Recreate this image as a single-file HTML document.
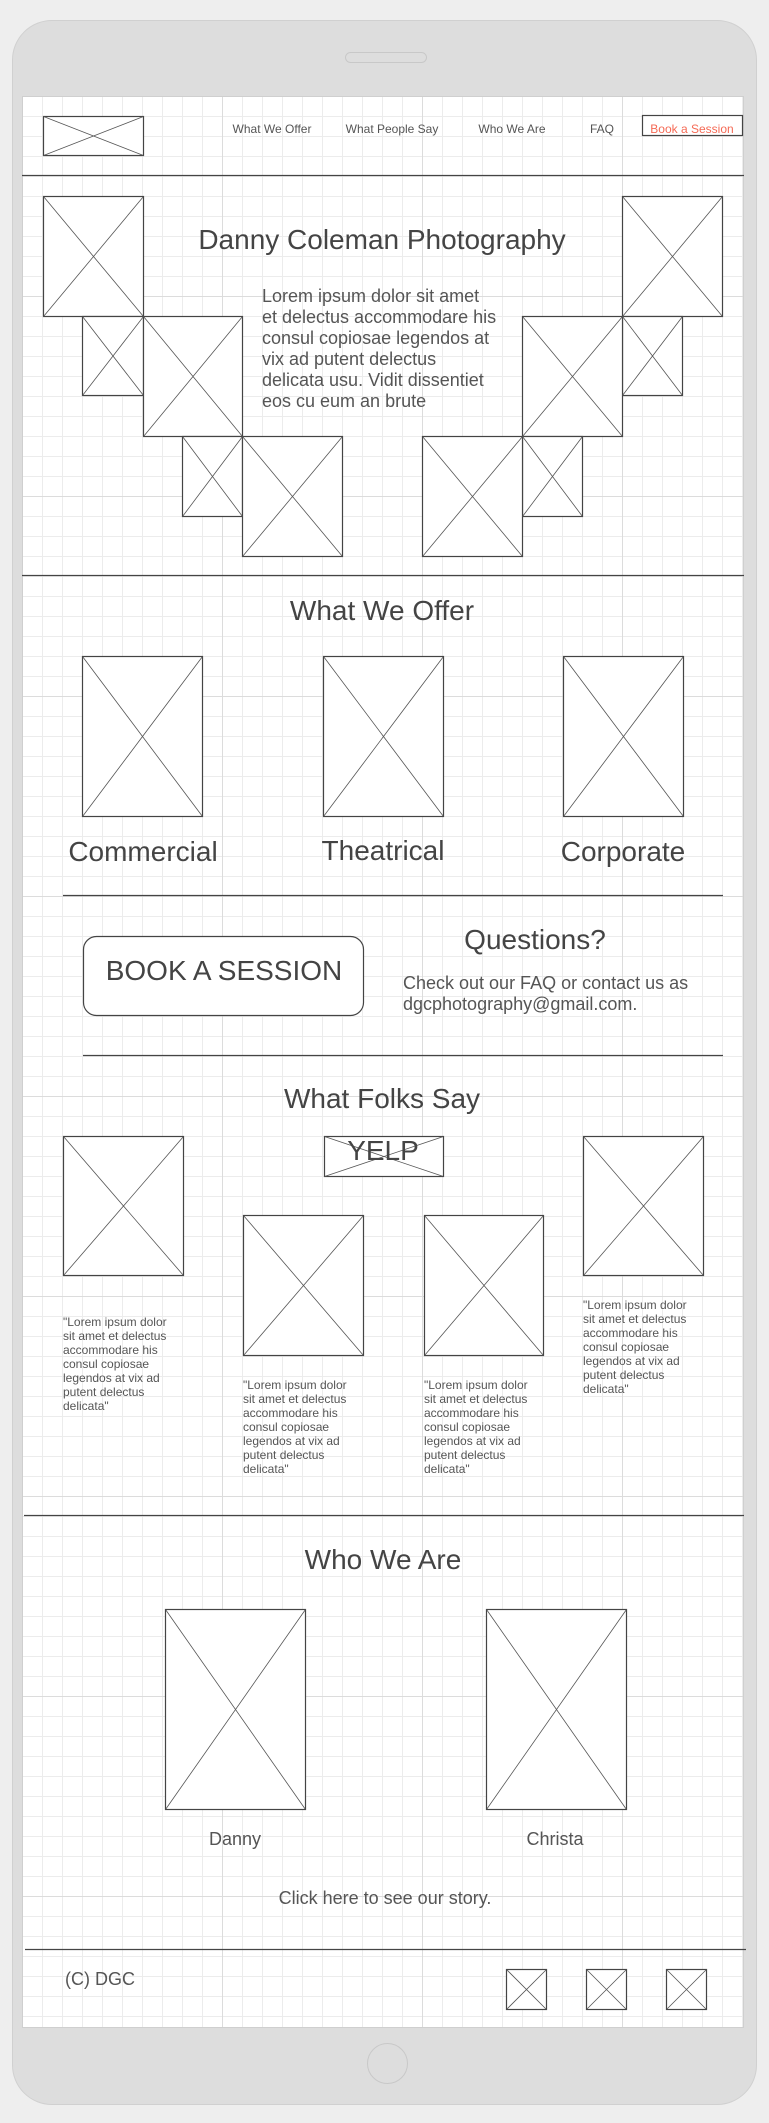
<!DOCTYPE html>
<html><head><meta charset="utf-8"><style>
html,body{margin:0;padding:0;background:#eeeeee;}
body{width:769px;height:2123px;position:relative;overflow:hidden;font-family:"Liberation Sans",sans-serif;}
.dev{position:absolute;left:12px;top:20px;width:745px;height:2085px;background:#dddddd;border:1px solid #d0d0d0;border-radius:40px;box-sizing:border-box;}
.scr{position:absolute;left:22px;top:96px;width:722px;height:1932px;border:1px solid #cfcfcf;box-sizing:border-box;
background-color:#fff;
background-image:linear-gradient(to right,#dcdcdc 1px,transparent 1px),linear-gradient(to bottom,#dcdcdc 1px,transparent 1px),linear-gradient(to right,#ececec 1px,transparent 1px),linear-gradient(to bottom,#ececec 1px,transparent 1px);
background-size:200px 200px,200px 200px,20px 20px,20px 20px;background-position:-1px -1px;}
.spk{position:absolute;left:345px;top:52px;width:82px;height:11px;border:1px solid #c8c8c8;border-radius:6px;box-sizing:border-box;}
.home{position:absolute;left:367px;top:2043px;width:41px;height:41px;border:1px solid #c8c8c8;border-radius:50%;box-sizing:border-box;}
svg{position:absolute;left:0;top:0;}
</style></head><body>
<div class="dev"></div>
<div class="spk"></div>
<div class="scr"></div>
<div class="home"></div>
<svg width="769" height="2123" viewBox="0 0 769 2123" xmlns="http://www.w3.org/2000/svg" font-family="Liberation Sans, sans-serif">
<defs></defs>
<g fill="#fff" stroke="#444" stroke-width="1.2">
<rect x="43.5" y="116.5" width="100" height="39"/>
<rect x="43.5" y="196.5" width="100" height="120"/><rect x="82.5" y="316.5" width="61" height="79"/><rect x="143.5" y="316.5" width="99" height="120"/><rect x="182.5" y="436.5" width="60" height="80"/><rect x="242.5" y="436.5" width="100" height="120"/>
<rect x="622.5" y="196.5" width="100" height="120"/><rect x="622.5" y="316.5" width="60" height="79"/><rect x="522.5" y="316.5" width="100" height="120"/><rect x="522.5" y="436.5" width="60" height="80"/><rect x="422.5" y="436.5" width="100" height="120"/>
<rect x="82.5" y="656.5" width="120" height="160"/><rect x="323.5" y="656.5" width="120" height="160"/><rect x="563.5" y="656.5" width="120" height="160"/>
<rect x="63.5" y="1136.5" width="120" height="139"/><rect x="324.5" y="1136.5" width="119" height="40"/><rect x="243.5" y="1215.5" width="120" height="140"/><rect x="424.5" y="1215.5" width="119" height="140"/><rect x="583.5" y="1136.5" width="120" height="139"/>
<rect x="165.5" y="1609.5" width="140" height="200"/><rect x="486.5" y="1609.5" width="140" height="200"/>
<rect x="506.5" y="1969.5" width="40" height="40"/><rect x="586.5" y="1969.5" width="40" height="40"/><rect x="666.5" y="1969.5" width="40" height="40"/>
<rect x="642.5" y="115.5" width="100" height="20"/>
<rect x="83.5" y="936.5" width="280" height="79" rx="13"/>
</g>
<g stroke="#555" stroke-width="0.8">
<path d="M43.5 116.5L143.5 155.5M143.5 116.5L43.5 155.5"/>
<path d="M43.5 196.5L143.5 316.5M143.5 196.5L43.5 316.5"/>
<path d="M82.5 316.5L143.5 395.5M143.5 316.5L82.5 395.5"/>
<path d="M143.5 316.5L242.5 436.5M242.5 316.5L143.5 436.5"/>
<path d="M182.5 436.5L242.5 516.5M242.5 436.5L182.5 516.5"/>
<path d="M242.5 436.5L342.5 556.5M342.5 436.5L242.5 556.5"/>
<path d="M622.5 196.5L722.5 316.5M722.5 196.5L622.5 316.5"/>
<path d="M622.5 316.5L682.5 395.5M682.5 316.5L622.5 395.5"/>
<path d="M522.5 316.5L622.5 436.5M622.5 316.5L522.5 436.5"/>
<path d="M522.5 436.5L582.5 516.5M582.5 436.5L522.5 516.5"/>
<path d="M422.5 436.5L522.5 556.5M522.5 436.5L422.5 556.5"/>
<path d="M82.5 656.5L202.5 816.5M202.5 656.5L82.5 816.5"/>
<path d="M323.5 656.5L443.5 816.5M443.5 656.5L323.5 816.5"/>
<path d="M563.5 656.5L683.5 816.5M683.5 656.5L563.5 816.5"/>
<path d="M63.5 1136.5L183.5 1275.5M183.5 1136.5L63.5 1275.5"/>
<path d="M324.5 1136.5L443.5 1176.5M443.5 1136.5L324.5 1176.5"/>
<path d="M243.5 1215.5L363.5 1355.5M363.5 1215.5L243.5 1355.5"/>
<path d="M424.5 1215.5L543.5 1355.5M543.5 1215.5L424.5 1355.5"/>
<path d="M583.5 1136.5L703.5 1275.5M703.5 1136.5L583.5 1275.5"/>
<path d="M165.5 1609.5L305.5 1809.5M305.5 1609.5L165.5 1809.5"/>
<path d="M486.5 1609.5L626.5 1809.5M626.5 1609.5L486.5 1809.5"/>
<path d="M506.5 1969.5L546.5 2009.5M546.5 1969.5L506.5 2009.5"/>
<path d="M586.5 1969.5L626.5 2009.5M626.5 1969.5L586.5 2009.5"/>
<path d="M666.5 1969.5L706.5 2009.5M706.5 1969.5L666.5 2009.5"/>
</g>
<g stroke="#444" stroke-width="1.2">
<path d="M22 175.5H744M22 575.5H744M63 895.5H723M83 1055.5H723M24 1515.5H744M25 1949.5H746"/>
</g>
<g fill="#555" font-size="12" text-anchor="middle">
<text x="272" y="133">What We Offer</text>
<text x="392" y="133">What People Say</text>
<text x="512" y="133">Who We Are</text>
<text x="602" y="133">FAQ</text>
<text x="692" y="133" fill="#f56a55">Book a Session</text>
</g>
<g fill="#444" font-size="28" text-anchor="middle">
<text x="382" y="249">Danny Coleman Photography</text>
<text x="382" y="620">What We Offer</text>
<text x="143" y="861">Commercial</text>
<text x="383" y="860">Theatrical</text>
<text x="623" y="861">Corporate</text>
<text x="224" y="980">BOOK A SESSION</text>
<text x="535" y="949">Questions?</text>
<text x="382" y="1108">What Folks Say</text>
<text x="383" y="1160">YELP</text>
<text x="383" y="1569">Who We Are</text>
</g>
<g fill="#555" font-size="18">
<text x="262" y="302">Lorem ipsum dolor sit amet</text>
<text x="262" y="323">et delectus accommodare his</text>
<text x="262" y="344">consul copiosae legendos at</text>
<text x="262" y="365">vix ad putent delectus</text>
<text x="262" y="386">delicata usu. Vidit dissentiet</text>
<text x="262" y="407">eos cu eum an brute</text>
<text x="403" y="989">Check out our FAQ or contact us as</text>
<text x="403" y="1010">dgcphotography@gmail.com.</text>
<text x="235" y="1845" text-anchor="middle">Danny</text>
<text x="555" y="1845" text-anchor="middle">Christa</text>
<text x="385" y="1904" text-anchor="middle">Click here to see our story.</text>
<text x="65" y="1985">(C) DGC</text>
</g>
<g fill="#555" font-size="12">
<text x="63" y="1326">"Lorem ipsum dolor</text><text x="63" y="1340">sit amet et delectus</text><text x="63" y="1354">accommodare his</text><text x="63" y="1368">consul copiosae</text><text x="63" y="1382">legendos at vix ad</text><text x="63" y="1396">putent delectus</text><text x="63" y="1410">delicata"</text>
<text x="243" y="1389">"Lorem ipsum dolor</text><text x="243" y="1403">sit amet et delectus</text><text x="243" y="1417">accommodare his</text><text x="243" y="1431">consul copiosae</text><text x="243" y="1445">legendos at vix ad</text><text x="243" y="1459">putent delectus</text><text x="243" y="1473">delicata"</text>
<text x="424" y="1389">"Lorem ipsum dolor</text><text x="424" y="1403">sit amet et delectus</text><text x="424" y="1417">accommodare his</text><text x="424" y="1431">consul copiosae</text><text x="424" y="1445">legendos at vix ad</text><text x="424" y="1459">putent delectus</text><text x="424" y="1473">delicata"</text>
<text x="583" y="1309">"Lorem ipsum dolor</text><text x="583" y="1323">sit amet et delectus</text><text x="583" y="1337">accommodare his</text><text x="583" y="1351">consul copiosae</text><text x="583" y="1365">legendos at vix ad</text><text x="583" y="1379">putent delectus</text><text x="583" y="1393">delicata"</text>
</g>
</svg>
</body></html>
